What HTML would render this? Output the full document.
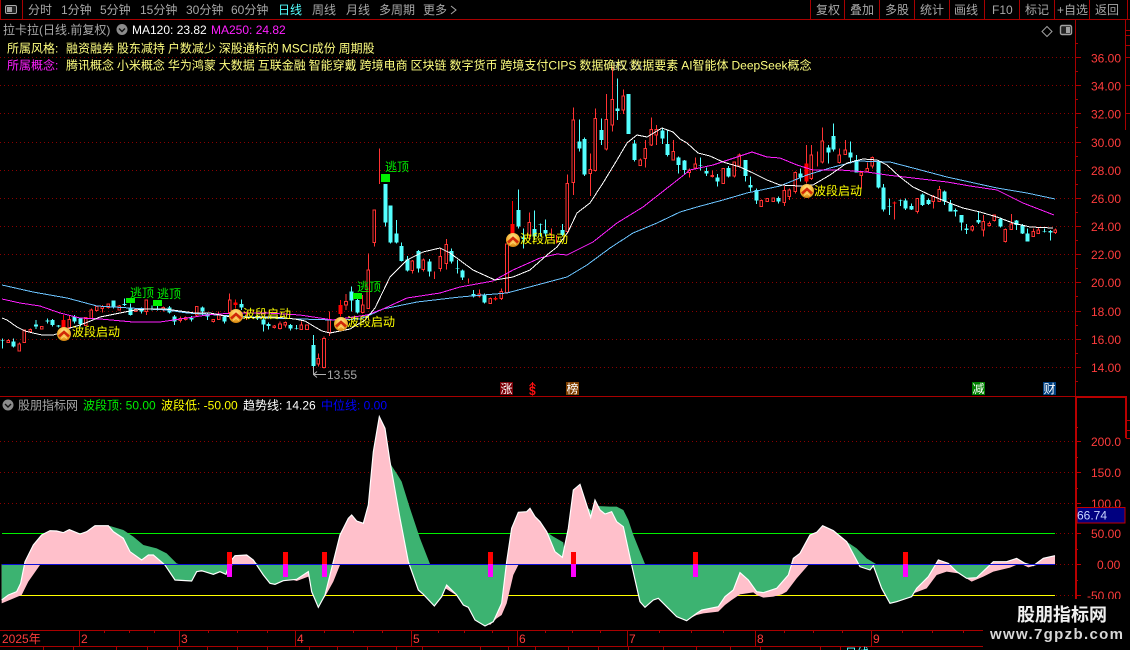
<!DOCTYPE html>
<html><head><meta charset="utf-8"><title>K线</title>
<style>
html,body{margin:0;padding:0;background:#000;width:1130px;height:650px;overflow:hidden}
svg{display:block;position:absolute;left:0;top:0}
text{font-family:"Liberation Sans","WenQuanYi Zen Hei","Noto Sans CJK SC",sans-serif;font-size:12px;white-space:pre}
.nav{fill:#a8a8a8}.ax{fill:#ff3c3c}.y{fill:#ffff80;word-spacing:-.4px}.sig{fill:#ffff00}.g{fill:#00f000}
.cw{fill:none;stroke:#54ffff;stroke-width:3}.cb{fill:none;stroke:#54ffff;stroke-width:12}
.rw{fill:none;stroke:#ff3232;stroke-width:3}.rb{fill:#000;stroke:#ff3232;stroke-width:3}
.rf{fill:none;stroke:#ff0000;stroke-width:12}
</style></head><body>
<svg width="1130" height="650" viewBox="0 0 1130 650" xmlns="http://www.w3.org/2000/svg">
<defs>
<radialGradient id="ball" cx="50%" cy="30%" r="75%"><stop offset="0" stop-color="#ffe88a"/><stop offset=".6" stop-color="#f5b030"/><stop offset="1" stop-color="#c87808"/></radialGradient>
<g id="ic"><circle r="7" fill="url(#ball)"/><path d="M-5 2.5L0-2L5 2.5" fill="none" stroke="#d02808" stroke-width="2.6"/><path d="M-3 4.5L0 2L3 4.5" fill="none" stroke="#ffd070" stroke-width="1"/></g>
<path id="wf" d="M5 508L5 615L25 600L50 590L62 565L75 500L100 450L125 420L150 407L170 408L190 413L208 404L240 417L260 410L285 392L325 392L340 410L370 430L390 470L425 495L445 480L460 480L495 510L525 555L575 558L590 530L605 527L640 538L660 530L678 538L690 500L705 482L740 480L760 495L790 540L810 565L825 568L850 557L890 553L925 530L935 590L955 637L975 600L1000 500L1020 420L1045 370L1055 360L1070 378L1090 385L1105 330L1120 170L1138 65L1155 100L1170 200L1200 370L1225 500L1255 585L1270 598L1303 633L1325 605L1340 570L1370 600L1390 630L1405 637L1425 675L1455 693L1480 680L1505 625L1520 500L1535 400L1555 352L1580 350L1590 340L1605 365L1620 380L1640 410L1665 470L1687 487L1705 400L1720 285L1740 268L1772 367L1785 315L1800 345L1815 357L1835 350L1850 380L1870 395L1895 510L1920 620L1935 637L1960 615L1975 610L1990 625L2005 640L2030 665L2060 677L2090 655L2105 645L2155 635L2175 605L2200 585L2220 533L2245 555L2270 590L2290 593L2330 580L2365 540L2380 490L2400 475L2430 420L2450 412L2468 392L2500 407L2540 440L2580 515L2610 525L2620 512L2645 580L2670 625L2690 620L2735 605L2750 580L2785 545L2815 495L2845 505L2870 530L2900 550L2930 548L2980 500L3020 500L3050 490L3075 505L3100 512L3130 490L3165 482L3165 508Z"/>
<path id="sf" d="M5 508L5 625L65 600L85 560L120 510L130 490L200 440L280 420L330 393L370 405L400 425L430 450L470 460L500 475L530 505L545 510L560 520L600 530L640 530L700 510L730 490L760 497L790 520L880 555L890 558L925 545L940 600L955 630L975 605L1000 560L1020 510L1040 470L1100 420L1170 205L1190 235L1205 260L1230 340L1260 430L1290 507L1320 570L1400 620L1470 690L1490 670L1505 660L1520 625L1540 540L1555 510L1600 420L1635 408L1660 425L1690 442L1695 480L1720 400L1765 340L1780 350L1790 333L1830 335L1850 335L1870 345L1885 375L1900 420L1920 470L1935 507L1960 560L2000 620L2060 675L2090 660L2110 655L2155 650L2175 630L2195 615L2220 598L2260 592L2270 600L2290 608L2320 605L2345 598L2360 590L2390 550L2425 510L2440 480L2480 420L2530 433L2570 460L2600 490L2628 507L2640 540L2670 620L2730 608L2740 595L2780 580L2810 540L2840 530L2875 535L2915 560L2950 545L2980 530L3030 518L3060 505L3085 517L3110 510L3130 495L3165 488L3165 508Z"/>
<clipPath id="up"><rect x="0" y="0" width="3400" height="508"/></clipPath>
<clipPath id="dn"><rect x="0" y="508" width="3400" height="300"/></clipPath>
</defs>

<!-- top bar -->
<g stroke="#a80000" fill="none" shape-rendering="crispEdges">
<path d="M0 19.5H1130M0.5 0V19M22.5 0V19M810.5 0V19M844.5 0V19M879.5 0V19M914.5 0V19M949.5 0V19M984.5 0V19M1019.5 0V19M1054.5 0V19M1089.5 0V19M1127.5 0V19"/>
</g>
<rect x="5.5" y="5.5" width="11" height="8" rx="1.5" fill="#222" stroke="#a8a8a8"/><rect x="7" y="7" width="5" height="5" fill="#a0a0a0"/>
<g class="nav">
<text x="28" y="14">分时</text><text x="61" y="14">1分钟</text><text x="100" y="14">5分钟</text><text x="140" y="14">15分钟</text><text x="186" y="14">30分钟</text><text x="231" y="14">60分钟</text>
<text x="278" y="14" style="fill:#54ffff">日线</text><text x="312" y="14">周线</text><text x="346" y="14">月线</text><text x="379" y="14">多周期</text><text x="423" y="14">更多</text>
<text x="816" y="14">复权</text><text x="850" y="14">叠加</text><text x="885" y="14">多股</text><text x="920" y="14">统计</text><text x="954" y="14">画线</text><text x="992" y="14">F10</text><text x="1025" y="14">标记</text><text x="1057" y="14">+自选</text><text x="1095" y="14">返回</text>
</g>
<path d="M451 6L456 10L451 14" fill="none" stroke="#a8a8a8"/>

<!-- main grid -->
<g stroke="#8a0000" stroke-dasharray="1 3" shape-rendering="crispEdges">
<path d="M0 57.5H1075M0 85.5H1075M0 113.5H1075M0 142.5H1075M0 170.5H1075M0 198.5H1075M0 226.5H1075M0 254.5H1075M0 282.5H1075M0 311.5H1075M0 339.5H1075M0 367.5H1075"/>
</g>
<g stroke="#a80000" fill="none" shape-rendering="crispEdges">
<path d="M1075.5 19V396M1125.5 19V130M1075 57.5h6M1075 85.5h6M1075 113.5h6M1075 142.5h6M1075 170.5h6M1075 198.5h6M1075 226.5h6M1075 254.5h6M1075 282.5h6M1075 311.5h6M1075 339.5h6M1075 367.5h6M1075 43.5h3M1075 71.5h3M1075 99.5h3M1075 127.5h3M1075 156.5h3M1075 184.5h3M1075 212.5h3M1075 240.5h3M1075 268.5h3M1075 296.5h3M1075 325.5h3M1075 353.5h3M1075 381.5h3M1126 30.5h4M1126 35.5h4M1126 45.5h4M1126 57.5h4M1126 85.5h4M1126 113.5h4"/>
<path d="M0 396.5H1075"/>
</g>
<g class="ax">
<text x="1091" y="62.5">36.00</text><text x="1091" y="90.5">34.00</text><text x="1091" y="118.5">32.00</text><text x="1091" y="147">30.00</text><text x="1091" y="175">28.00</text><text x="1091" y="203">26.00</text><text x="1091" y="231">24.00</text><text x="1091" y="259">22.00</text><text x="1091" y="287">20.00</text><text x="1091" y="316">18.00</text><text x="1091" y="344">16.00</text><text x="1091" y="372">14.00</text>
</g>

<!-- candles -->
<g shape-rendering="crispEdges">
<g transform="translate(0 270) scale(.33333)">
<path class="cw" d="M7 205V235M41 205V232M108 150V177M142 145V160M158 147V170M175 165V172M224 135V160M241 145V170M340 92V115M374 85V108M391 100V137M424 113V130M456 107V122M472 107V122M508 108V130M523 135V165M574 138V155M607 110V135M622 128V150M673 138V160M724 88V120M772 135V150M790 145V185M806 158V178M872 162V182M889 165V178M940 195V295M1055 50V125M1072 85V130"/>
<path class="cb" d="M7 211V213M41 215V230M108 163V170M142 152V155M158 150V165M175 166V170M224 140V155M241 145V162M340 92V112M374 102V105M391 115V135M424 120V125M456 115V118M472 115V118M508 112V128M523 140V155M574 144V148M607 112V125M622 135V140M673 140V155M724 102V112M772 138V146M790 148V163M806 162V168M872 165V175M889 175V177M940 225V288M1055 65V92M1072 90V128"/>
<path class="rw" d="M25 207V219M58 218V245M91 175V187M208 135V175M257 142V168M274 115V145M290 108V125M307 105V128M325 100V115M358 105V122M407 118V125M439 90V135M490 110V125M541 140V158M557 140V152M590 108V140M640 148V158M656 125V150M689 70V130M740 125V150M823 165V175M840 155V178M856 155V172M904 155V180M921 163V180M955 250V290M972 200V295M988 125V198M1038 72V120M1088 75V130"/>
<path class="rb" d="M21 211h8V217h-8zM54 222h8V243h-8zM69 180h8V218h-8zM87 178h8V184h-8zM121 170h8V177h-8zM204 148h8V172h-8zM253 142h8V166h-8zM270 120h8V145h-8zM286 110h8V122h-8zM303 110h8V115h-8zM321 102h8V112h-8zM354 108h8V120h-8zM403 119h8V124h-8zM435 90h8V125h-8zM486 112h8V118h-8zM537 145h8V152h-8zM553 142h8V148h-8zM586 110h8V135h-8zM636 149h8V155h-8zM652 135h8V148h-8zM685 90h8V128h-8zM819 168h8V172h-8zM836 162h8V175h-8zM852 158h8V165h-8zM900 165h8V178h-8zM917 165h8V178h-8zM951 265h8V282h-8zM968 205h8V292h-8zM984 148h8V188h-8zM1034 95h8V105h-8zM1084 105h8V128h-8z"/>
<path class="rw" style="stroke:#f00" d="M190 135V172M706 88V115M1021 90V140"/>
<path class="rf" d="M190 150V172M706 98V105M1021 105V132"/>
</g>
<g transform="translate(340 60) scale(.33333)">
<path class="cw" d="M136 372V500M151 437V550M169 480V550M185 548V605M202 588V635M235 570V638M268 597V650M335 565V610M352 600V640M367 628V660M400 690V712M433 700V730M535 388V505M550 505V565M583 452V540M601 490V530M616 478V530M667 492V530M718 178V275M733 232V348M784 175V255M832 55V180M883 240V305M967 203V252M982 210V290M1016 290V340"/>
<path class="cb" d="M136 372V488M151 437V547M169 520V548M185 558V603M202 598V632M235 573V625M268 605V635M335 573V605M352 625V627M367 632V652M400 702V710M433 705V728M535 450V500M550 533V537M583 507V530M601 493V495M616 510V520M667 510V525M718 245V265M733 237V343M784 210V240M832 145V153M865 102V222M883 250V300M967 212V235M982 252V285M1016 293V315"/>
<path class="rw" d="M85 580V745M103 450V560M118 265V372M217 600V640M250 595V635M283 635V657M301 565V635M319 537V628M385 655V670M418 688V712M451 712V732M466 710V722M484 685V720M568 457V540M634 505V540M650 525V550M682 343V520M700 142V405M751 280V408M766 145V335M799 102V272M817 20V215M850 88V162M901 295V318M916 240V322M934 172V258M949 195V255M1000 240V300"/>
<path class="rb" d="M81 630h8V745h-8zM99 450h8V548h-8zM213 603h8V632h-8zM246 600h8V628h-8zM297 590h8V625h-8zM315 553h8V610h-8zM414 702h8V708h-8zM447 715h8V730h-8zM480 695h8V715h-8zM497 552h8V698h-8zM564 487h8V525h-8zM678 370h8V515h-8zM696 180h8V368h-8zM747 328h8V340h-8zM762 175h8V332h-8zM795 178h8V267h-8zM813 118h8V195h-8zM846 108h8V150h-8zM897 300h8V316h-8zM912 265h8V295h-8zM930 208h8V255h-8zM945 208h8V225h-8zM996 275h8V300h-8z"/>
<path class="rw" style="stroke:#f00" d="M517 423V560"/>
<path class="rf" d="M466 714V718M517 492V560"/>
</g>
<g transform="translate(680 100) scale(.33333)">
<path class="cw" d="M13 180V222M61 172V212M79 202V228M112 222V260M145 198V233M196 180V245M211 230V275M229 265V312M295 290V310M361 205V245M445 135V190M460 70V155M511 125V190M529 165V218M595 180V265M610 252V335M628 295V345M661 298V318M676 295V330M694 310V330M727 280V318M745 295V315M793 272V315M811 300V335M826 325V350M844 345V392M859 372V402M895 335V372M961 352V382M1009 360V390M1027 372V402M1042 385V425M1093 385V398M1111 390V422"/>
<path class="cb" d="M13 182V210M61 196V198M79 213V220M112 232V245M145 204V230M196 180V228M211 255V263M229 270V302M295 294V305M361 220V232M445 143V158M460 108V148M511 158V172M529 180V218M595 183V262M610 262V328M628 318V320M661 300V302M676 302V325M694 318V328M727 283V315M745 300V312M793 275V305M811 310V335M826 330V335M844 345V368M859 385V390M895 360V368M961 357V380M1009 362V375M1027 375V400M1042 400V425M1093 393V395M1111 393V398"/>
<path class="rw" d="M28 205V233M46 172V205M97 212V232M130 205V252M163 186V232M178 160V200M244 298V320M262 295V305M280 293V305M313 258V318M328 265V300M346 215V280M394 135V240M379 135V250M412 155V200M427 82V190M478 145V190M496 120V165M544 215V265M562 188V215M577 170V205M643 305V358M712 295V340M760 285V325M778 258V305M877 375V395M910 345V410M928 365V380M943 345V365M976 385V428M994 342V390M1060 385V410M1075 382V402M1126 385V402"/>
<path class="rb" d="M24 210h8V218h-8zM42 192h8V204h-8zM93 226h8V230h-8zM126 205h8V250h-8zM159 186h8V228h-8zM174 165h8V198h-8zM240 301h8V319h-8zM258 296h8V304h-8zM276 294h8V304h-8zM309 272h8V308h-8zM324 270h8V290h-8zM342 217h8V275h-8zM390 165h8V235h-8zM423 123h8V186h-8zM474 165h8V188h-8zM492 150h8V163h-8zM540 218h8V226h-8zM558 205h8V214h-8zM573 172h8V198h-8zM708 295h8V335h-8zM756 290h8V305h-8zM774 268h8V305h-8zM873 380h8V390h-8zM906 365h8V390h-8zM924 370h8V376h-8zM939 345h8V362h-8zM972 388h8V425h-8zM990 372h8V388h-8zM1056 395h8V410h-8zM1071 390h8V400h-8zM1122 390h8V398h-8z"/>
<path class="rf" d="M379 190V245M643 308V310"/>
</g>
</g>

<!-- MA lines -->
<g fill="none" stroke-width="1" shape-rendering="crispEdges">
<polyline stroke="#6cc4ff" points="2,285 33,292 67,298 97,306 130,308 167,310 187,313 217,315 267,318 300,319 333,320 360,319 372,314 383,309 417,302 460,297 483,295 507,293 537,285 567,277 587,265 610,248 633,233 657,223 680,212 697,207 723,200 747,193 780,186 807,175 830,168 857,161 890,162 913,168 947,177 997,188 1027,193 1055,199"/>
<polyline stroke="#ff20ff" points="2,299 20,303 40,306 60,313 80,318 100,319 133,322 160,322 187,318 207,315 233,313 267,313 300,315 333,320 367,315 383,309 407,298 440,293 460,287 493,281 513,270 540,258 557,254 567,255 593,242 617,223 643,207 680,178 690,170 713,165 737,157 752,152 767,157 780,158 797,165 813,170 840,170 867,172 887,175 913,178 947,182 970,186 997,190 1023,203 1054,215"/>
<polyline stroke="#fff" points="2,318 7,320 17,327 25,331 33,333 42,335 53,335 60,333 70,328 80,325 88,322 100,317 115,314 125,312 135,310 147,309 155,309 165,309 180,311 195,313 210,313 225,316 240,318 260,317 275,317 295,319 305,321 315,327 322,331 330,333 340,331 350,329 365,320 375,308 390,277 397,270 407,260 423,252 440,248 450,253 473,270 495,280 513,277 530,270 547,255 557,247 568,232 577,213 590,203 603,183 617,160 627,143 637,135 647,137 662,128 673,132 680,139 687,143 698,153 710,156 723,162 740,167 753,173 767,180 780,185 800,186 813,185 830,175 847,163 863,159 877,160 887,165 900,177 913,187 930,195 947,202 963,208 980,212 997,217 1013,223 1030,227 1053,228"/>
</g>

<!-- signals -->
<g shape-rendering="crispEdges" fill="#00f000">
<rect x="126" y="298" width="9" height="5"/><rect x="153" y="300" width="9" height="6"/><rect x="353" y="293" width="9" height="6"/><rect x="381" y="174" width="9" height="8"/>
</g>
<g class="g"><text x="130" y="297">逃顶</text><text x="157" y="298">逃顶</text><text x="357" y="291">逃顶</text><text x="385" y="171">逃顶</text></g>
<use href="#ic" x="64" y="334"/><use href="#ic" x="236" y="316"/><use href="#ic" x="341" y="324"/><use href="#ic" x="513" y="240"/><use href="#ic" x="807" y="191"/>
<g class="sig"><text x="72" y="336">波段启动</text><text x="243" y="318">波段启动</text><text x="347" y="326">波段启动</text><text x="520" y="243">波段启动</text><text x="814" y="195">波段启动</text></g>
<path d="M313.5 367V374.5H326M313.5 374.5L317 371.5M313.5 374.5L317 377.5" fill="none" stroke="#b0b0b0"/>
<text x="327" y="379" fill="#a8a8a8">13.55</text>

<!-- header texts -->
<text x="612" y="70" fill="#808080">35.35</text>
<text x="3" y="34" fill="#a8a8a8">拉卡拉(日线.前复权)</text>
<circle cx="122" cy="29.5" r="5.5" fill="#8c8c8c"/><path d="M119 28.5L122 31.5L125 28.5" fill="none" stroke="#111" stroke-width="1.4"/>
<text x="132" y="34" fill="#fff">MA120: 23.82</text><text x="211" y="34" fill="#ff20ff">MA250: 24.82</text>
<rect x="1060.5" y="25.5" width="11" height="9" rx="1.5" fill="#222" stroke="#a0a0a0" stroke-width="1.4"/><rect x="1066" y="27" width="4" height="6" fill="#a0a0a0"/>
<path d="M1047 26.5L1052 31.5L1047 36.5L1042 31.5Z" fill="none" stroke="#a0a0a0"/>
<text x="7" y="52.5" class="y">所属风格:</text>
<text x="66" y="52.5" class="y">融资融券 股东减持 户数减少 深股通标的 MSCI成份 周期股</text>
<text x="7" y="69.5" fill="#ff20ff">所属概念:</text>
<text x="66" y="69.5" class="y">腾讯概念 小米概念 华为鸿蒙 大数据 互联金融 智能穿戴 跨境电商 区块链 数字货币 跨境支付CIPS 数据确权 数据要素 AI智能体 DeepSeek概念</text>

<!-- bottom markers -->
<g shape-rendering="crispEdges">
<rect x="500" y="382" width="13" height="13" fill="#7a0008"/><rect x="566" y="382" width="13" height="13" fill="#804000"/><rect x="972" y="382" width="13" height="13" fill="#008000"/><rect x="1043" y="382" width="13" height="13" fill="#003f7f"/>
</g>
<g fill="#fff"><text x="500.5" y="393">涨</text><text x="566.5" y="393">榜</text><text x="972.5" y="393">减</text><text x="1043.5" y="393">财</text></g>
<text x="529" y="395" fill="#ff1010" style="font-weight:bold">$</text>
<path d="M532.5 382V388M529.5 386L532.5 383L535.5 386" fill="none" stroke="#ff1010"/>

<!-- lower pane -->
<g stroke="#8a0000" stroke-dasharray="1 3" shape-rendering="crispEdges">
<path d="M0 441.5H1075M0 472.5H1075M0 503.5H1075M1056 533.5H1075M1056 564.5H1075M1056 595.5H1075"/>
</g>
<circle cx="8" cy="405" r="5.5" fill="#8c8c8c"/><path d="M5 404L8 407L11 404" fill="none" stroke="#111" stroke-width="1.4"/>
<text x="18" y="409.5" fill="#a8a8a8">股朋指标网</text>
<text x="83" y="409.5" fill="#00f000">波段顶: 50.00</text>
<text x="161" y="409.5" fill="#ffff00">波段低: -50.00</text>
<text x="243" y="409.5" fill="#fff">趋势线: 14.26</text>
<text x="321" y="409.5" fill="#0000ff">中位线: 0.00</text>

<path d="M2 533.5H1055" stroke="#00f000" shape-rendering="crispEdges"/>
<path d="M2 595.5H1055" stroke="#ffff00" shape-rendering="crispEdges"/>
<g transform="translate(0 395) scale(.33333)">
<g clip-path="url(#up)"><use href="#sf" fill="#3cb371"/><use href="#wf" fill="#ffc0cb"/></g>
<g clip-path="url(#dn)"><use href="#sf" fill="#ffc0cb"/><use href="#wf" fill="#3cb371"/></g>
<polyline fill="none" stroke="#fff" stroke-width="3.5" points="5,615 25,600 50,590 62,565 75,500 100,450 125,420 150,407 170,408 190,413 208,404 240,417 260,410 285,392 325,392 340,410 370,430 390,470 425,495 445,480 460,480 495,510 525,555 575,558 590,530 605,527 640,538 660,530 678,538 690,500 705,482 740,480 760,495 790,540 810,565 825,568 850,557 890,553 925,530 935,590 955,637 975,600 1000,500 1020,420 1045,370 1055,360 1070,378 1090,385 1105,330 1120,170 1138,65 1155,100 1170,200 1200,370 1225,500 1255,585 1270,598 1303,633 1325,605 1340,570 1370,600 1390,630 1405,637 1425,675 1455,693 1480,680 1505,625 1520,500 1535,400 1555,352 1580,350 1590,340 1605,365 1620,380 1640,410 1665,470 1687,487 1705,400 1720,285 1740,268 1772,367 1785,315 1800,345 1815,357 1835,350 1850,380 1870,395 1895,510 1920,620 1935,637 1960,615 1975,610 1990,625 2005,640 2030,665 2060,677 2090,655 2105,645 2155,635 2175,605 2200,585 2220,533 2245,555 2270,590 2290,593 2330,580 2365,540 2380,490 2400,475 2430,420 2450,412 2468,392 2500,407 2540,440 2580,515 2610,525 2620,512 2645,580 2670,625 2690,620 2735,605 2750,580 2785,545 2815,495 2845,505 2870,530 2900,550 2930,548 2980,500 3020,500 3050,490 3075,505 3100,512 3130,490 3165,482"/>
</g>
<path d="M2 564.5H1055" stroke="#1010d8" stroke-width="1" shape-rendering="crispEdges"/>
<g shape-rendering="crispEdges">
<path fill="#ff0000" d="M227 552h5v12h-5zM283 552h5v12h-5zM322 552h5v12h-5zM488 552h5v12h-5zM571 552h5v12h-5zM693 552h5v12h-5zM903 552h5v12h-5z"/>
<path fill="#ff00ff" d="M227 564h5v13h-5zM283 564h5v13h-5zM322 564h5v13h-5zM488 564h5v13h-5zM571 564h5v13h-5zM693 564h5v13h-5zM903 564h5v13h-5z"/>
</g>

<!-- lower axis -->
<g fill="none" stroke="#b80000" shape-rendering="crispEdges">
<path stroke-width="2" d="M1076 396V630M1076 397H1127M1126 396V438"/>
<path d="M1075 441.5h6M1075 472.5h6M1075 503.5h6M1075 533.5h6M1075 564.5h6M1075 595.5h6M1075 427.5h3M1075 457.5h3M1075 488.5h3M1075 518.5h3M1075 549.5h3M1075 580.5h3"/>
<path d="M1126 420.5h4M1126 430.5h4M1126 438.5h4"/>
</g>
<g class="ax">
<text x="1091" y="446">200.0</text><text x="1091" y="477">150.0</text><text x="1091" y="508">100.0</text><text x="1091" y="538">50.00</text><text x="1097" y="569">0.00</text><text x="1087" y="600">-50.00</text>
</g>
<rect x="1077" y="507.5" width="48" height="15.5" fill="#000080" stroke="#c00000"/>
<text x="1077" y="519.5" fill="#c8d4ff">66.74</text>

<!-- date axis -->
<g stroke="#a80000" fill="none" shape-rendering="crispEdges">
<path d="M0 630.5H983M0 646.5H983M79.5 631V646M179.5 631V646M295.5 631V646M411.5 631V646M517.5 631V646M627.5 631V646M755.5 631V646M871.5 631V646"/>
<path d="M104.5 630v3M129.5 630v3M154.5 630v3M208.5 630v3M237.5 630v3M267.5 630v3M324.5 630v3M353.5 630v3M382.5 630v3M438.5 630v3M464.5 630v3M492.5 630v3M545.5 630v3M572.5 630v3M600.5 630v3M659.5 630v3M691.5 630v3M723.5 630v3M784.5 630v3M813.5 630v3M842.5 630v3M902.5 630v3M932.5 630v3M963.5 630v3"/>
<path d="M43.5 646v4M73.5 646v4M116.5 646v4M147.5 646v4M177.5 646v4M207.5 646v4M237.5 646v4M267.5 646v4M309.5 646v4M337.5 646v4M367.5 646v4M396.5 646v4M422.5 646v4M480.5 646v4M508.5 646v4M535.5 646v4M568.5 646v4M598.5 646v4M628.5 646v4M663.5 646v4M696.5 646v4M730.5 646v4M760.5 646v4M820.5 646v4M840.5 646v4"/>
</g>
<g class="ax">
<text x="2" y="643">2025年</text><text x="81" y="643">2</text><text x="181" y="643">3</text><text x="297" y="643">4</text><text x="413" y="643">5</text><text x="519" y="643">6</text><text x="629" y="643">7</text><text x="757" y="643">8</text><text x="873" y="643">9</text>
</g>
<text x="845" y="657" fill="#54ffff">日线</text>

<!-- watermark -->
<rect x="983" y="599" width="147" height="51" fill="#000"/>
<text x="1017" y="621" fill="#f0f0f0" style="font-size:18px;font-weight:bold">股朋指标网</text>
<text x="990" y="639" fill="#d8d8d8" textLength="133" style="font-size:15px;font-weight:bold;font-family:'Liberation Sans',sans-serif">www.7gpzb.com</text>
</svg>
</body></html>
